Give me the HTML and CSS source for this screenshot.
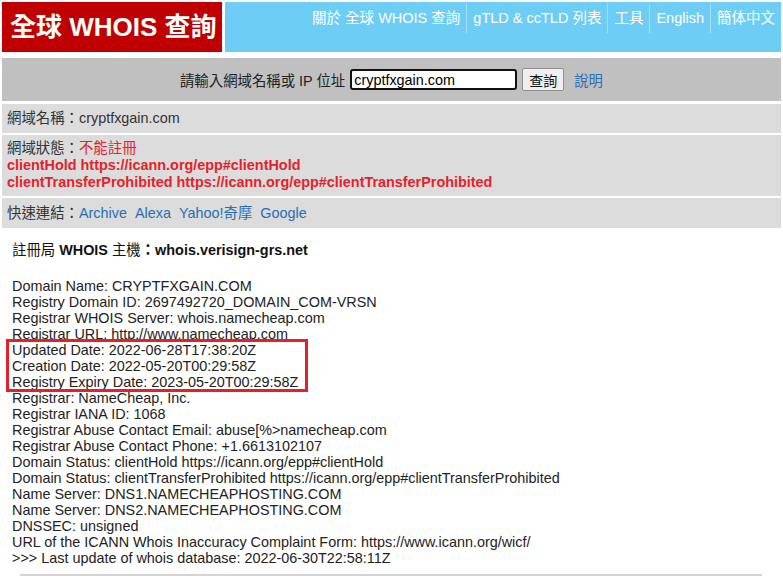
FILE: index.html
```html
<!DOCTYPE html>
<html lang="zh-Hant">
<head>
<meta charset="utf-8">
<title>全球 WHOIS 查詢</title>
<link rel="stylesheet" href="styles.css">
</head>
<body>
<div class="page">
  <header class="header">
    <div class="logo">全球 WHOIS 查詢</div>
    <nav class="nav">
      <a class="nav-item" href="#">關於 全球 WHOIS 查詢</a>
      <a class="nav-item" href="#">gTLD &amp; ccTLD 列表</a>
      <a class="nav-item" href="#">工具</a>
      <a class="nav-item" href="#">English</a>
      <a class="nav-item" href="#">簡体中文</a>
    </nav>
  </header>

  <form class="search">
    <span class="search-label">請輸入網域名稱或 IP 位址</span>
    <input class="search-input" type="text" value="cryptfxgain.com">
    <button class="search-btn" type="button">查詢</button>
    <a class="link help" href="#">說明</a>
  </form>

  <div class="rows">
    <div class="row row-name">網域名稱：cryptfxgain.com</div>
    <div class="row row-status">
      <div>網域狀態：<span class="red">不能註冊</span></div>
      <div class="red bold">clientHold https://icann.org/epp#clientHold</div>
      <div class="red bold">clientTransferProhibited https://icann.org/epp#clientTransferProhibited</div>
    </div>
    <div class="row row-links">快速連結：<a class="link quick" href="#">Archive</a><a class="link quick" href="#">Alexa</a><a class="link quick" href="#">Yahoo!奇摩</a><a class="link quick" href="#">Google</a></div>
  </div>

  <section class="whois">
    <div class="whois-title">註冊局 <b>WHOIS</b> 主機<b>：whois.verisign-grs.net</b></div>
    <div class="whois-data">
      <div>Domain Name: CRYPTFXGAIN.COM</div>
      <div>Registry Domain ID: 2697492720_DOMAIN_COM-VRSN</div>
      <div>Registrar WHOIS Server: whois.namecheap.com</div>
      <div>Registrar URL: http://www.namecheap.com</div>
      <div>Updated Date: 2022-06-28T17:38:20Z</div>
      <div>Creation Date: 2022-05-20T00:29:58Z</div>
      <div>Registry Expiry Date: 2023-05-20T00:29:58Z</div>
      <div>Registrar: NameCheap, Inc.</div>
      <div>Registrar IANA ID: 1068</div>
      <div>Registrar Abuse Contact Email: abuse[%&gt;namecheap.com</div>
      <div>Registrar Abuse Contact Phone: +1.6613102107</div>
      <div>Domain Status: clientHold https://icann.org/epp#clientHold</div>
      <div>Domain Status: clientTransferProhibited https://icann.org/epp#clientTransferProhibited</div>
      <div>Name Server: DNS1.NAMECHEAPHOSTING.COM</div>
      <div>Name Server: DNS2.NAMECHEAPHOSTING.COM</div>
      <div>DNSSEC: unsigned</div>
      <div>URL of the ICANN Whois Inaccuracy Complaint Form: https://www.icann.org/wicf/</div>
      <div>&gt;&gt;&gt; Last update of whois database: 2022-06-30T22:58:11Z</div>
    </div>
    <hr class="rule">
  </section>

  <div class="highlight"></div>
</div>
</body>
</html>
```

FILE: styles.css
```css
html, body {
  margin: 0;
  padding: 0;
  background: #fff;
}

body {
  font-family: "Liberation Sans", Arial, "Noto Sans CJK TC", sans-serif;
  font-size: 14.4px;
  color: #222;
}

.page {
  position: relative;
  padding: 2px;
}

.header {
  display: flex;
  gap: 3px;
  height: 50px;
}

.logo {
  width: 220px;
  flex: none;
  background: #c00000;
  color: #fff;
  font-weight: bold;
  font-size: 26px;
  line-height: 50px;
  padding-left: 8px;
  box-sizing: border-box;
  white-space: nowrap;
  overflow: hidden;
}

.nav {
  flex: 1;
  background: #6dcdf5;
  display: flex;
  justify-content: flex-end;
  align-items: flex-start;
  padding-top: 1px;
  padding-right: 0;
}

.nav-item {
  color: #fff;
  text-decoration: none;
  font-size: 14.5px;
  line-height: 30px;
  padding: 0 6px;
  border-left: 1px solid #a9def5;
}

.nav-item:first-child {
  border-left: none;
}

.search {
  margin: 6px 0 0;
  height: 43px;
  background: #c0c0c0;
  display: flex;
  justify-content: center;
  align-items: center;
  color: #222;
}

.search-label {
  margin-right: 5px;
}

.search-input {
  width: 167px;
  height: 21px;
  box-sizing: border-box;
  border: 2px solid #111;
  border-radius: 3px;
  padding: 0 2px;
  font: 14.4px "Liberation Sans", Arial, sans-serif;
  color: #000;
  background: #fff;
  outline: none;
}

.search-btn {
  margin-left: 5px;
  width: 42px;
  height: 23px;
  background: #efefef;
  border: 1px solid #8f8f8f;
  border-radius: 2px;
  font: 14px "Liberation Sans", "Noto Sans CJK TC", sans-serif;
  color: #111;
  padding: 0;
}

.link {
  color: #2a6eb5;
  text-decoration: none;
}

.help {
  margin-left: 10px;
}

.rows {
  margin-top: 3px;
  display: flex;
  flex-direction: column;
  gap: 2px;
}

.row {
  background: #dcdcdc;
  color: #333;
  padding: 0 5px;
}

.row-name {
  height: 29px;
  line-height: 29px;
}

.row-status {
  height: 61px;
  box-sizing: border-box;
  padding-top: 5px;
  line-height: 17px;
}

.row-links {
  height: 30px;
  line-height: 30px;
}

.quick {
  margin-right: 8px;
}

.red {
  color: #e3232b;
}

.bold {
  font-weight: bold;
}

.whois {
  padding: 14px 0 0 10px;
}

.whois-title {
  line-height: 16px;
  color: #111;
}

.whois-data {
  margin-top: 20px;
  line-height: 16px;
  color: #222;
}

.rule {
  margin: 8px 19px 0 8px;
  border: none;
  border-top: 2px solid #d4d4d4;
  height: 0;
}

.highlight {
  position: absolute;
  left: 6px;
  top: 339px;
  width: 302px;
  height: 53px;
  box-sizing: border-box;
  border: 3px solid #e3202b;
}
```
